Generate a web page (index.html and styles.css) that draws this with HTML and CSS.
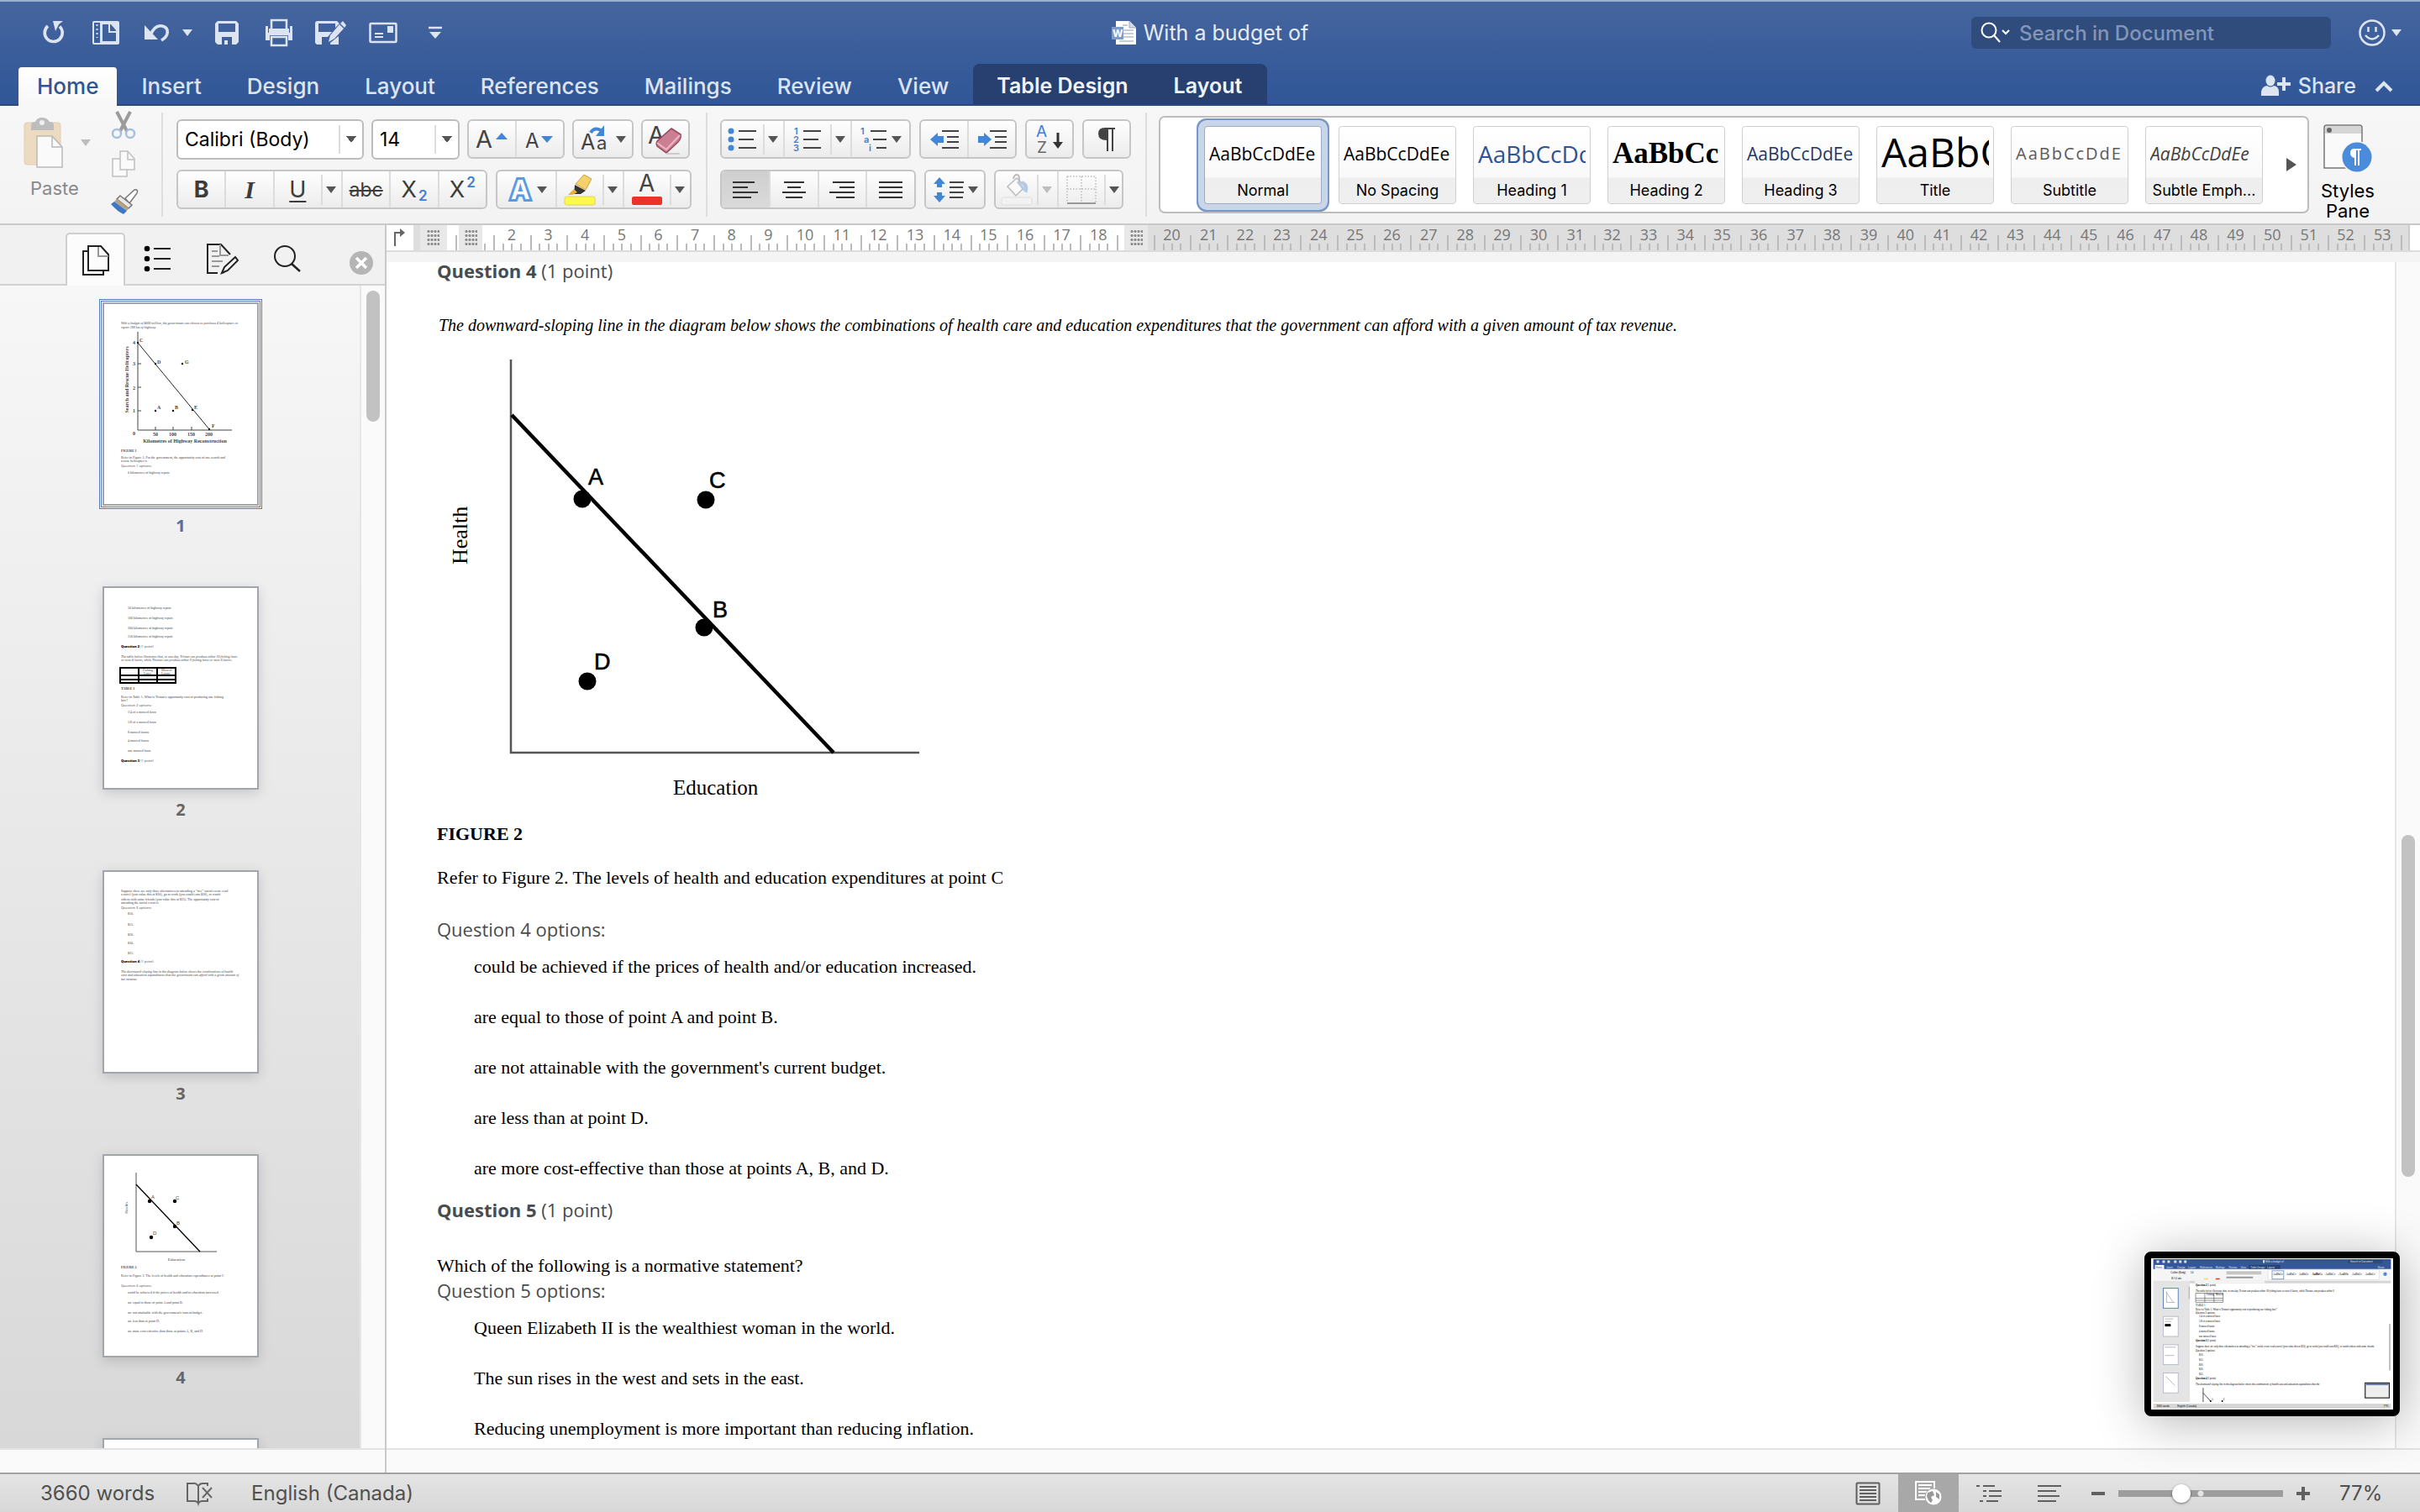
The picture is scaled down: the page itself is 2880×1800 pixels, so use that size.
FILE: index.html
```html
<!DOCTYPE html>
<html lang="en">
<head>
<meta charset="utf-8">
<title>With a budget of</title>
<link rel="stylesheet" href="styles.css">
</head>
<body>
<header class="header">
  <div class="titlebar">
    <div class="quick">
      <button class="qbtn" aria-label="Repeat"><svg width="28" height="30" viewBox="0 0 28 30"><path d="M7 7A10.500 10.500 0 1 0 21 7.500" fill="none" stroke="#dde4f1" stroke-width="3.600"/><path d="M13 1H25L20 5L16 13Z" fill="#dde4f1"/></svg></button>
      <button class="qbtn" aria-label="Sidebar"><svg width="32" height="30" viewBox="0 0 32 30"><path fill-rule="evenodd" d="M2 1H30Q32 1 32 3V27Q32 29 30 29H2Q0 29 0 27V3Q0 1 2 1ZM2 3V27H9V3ZM12 5V25H28V12L22 5Z" fill="#dde4f1"/><path d="M5.500 5V21" stroke="#dde4f1" stroke-width="2" stroke-dasharray="2 3"/><path d="M20 5V14H28" fill="none" stroke="#dde4f1" stroke-width="2"/></svg></button>
      <button class="qbtn undo" aria-label="Undo"><svg width="32" height="26" viewBox="0 0 32 26"><path d="M8 16C12 6 17 4 22 5C31 7 30 17 21 22" fill="none" stroke="#dde4f1" stroke-width="3.600"/><path d="M1 4V21H17Z" fill="#dde4f1"/></svg></button>
      <button class="qbtn qdrop" aria-label="Undo list"><i class="caret light"></i></button>
      <button class="qbtn" aria-label="Save"><svg width="28" height="30" viewBox="0 0 28 30"><path fill-rule="evenodd" d="M3 1H25L28 4V26L25 29H3L0 26V4ZM4 4V14H24V4ZM8 20V29H11V24H15V29H20V20Z" fill="#dde4f1"/></svg></button>
      <button class="qbtn" aria-label="Print"><svg width="34" height="34" viewBox="0 0 34 34"><rect x="8" y="2" width="18" height="12" fill="none" stroke="#dde4f1" stroke-width="2.500"/><path d="M1 9H4V17H30V9H33V26H28V20H6V26H1Z" fill="#dde4f1"/><rect x="5" y="12" width="24" height="6" fill="#dde4f1"/><rect x="8" y="22" width="18" height="10" fill="none" stroke="#dde4f1" stroke-width="2.500"/></svg></button>
      <button class="qbtn" aria-label="Save as"><svg width="38" height="30" viewBox="0 0 38 30"><path fill-rule="evenodd" d="M3 1H26L29 4L24 9V4H4V14H20L15 20H8V29H2L0 27V4Q0 1 3 1ZM18 27L28 19V29H18Z" fill="#dde4f1"/><path d="M16 26L18 18L29 5L34 10L23 22Z M30 4L33 1L37 6L35 9Z" fill="#dde4f1"/></svg></button>
      <button class="qbtn" aria-label="Mail"><svg width="34" height="26" viewBox="0 0 34 26"><rect x="1.500" y="2" width="31" height="22" rx="1" fill="none" stroke="#dde4f1" stroke-width="2.500"/><rect x="22" y="5" width="7" height="8" fill="#dde4f1"/><path d="M7 14H17M7 18H17" stroke="#dde4f1" stroke-width="2"/></svg></button>
      <button class="qbtn" aria-label="Customize toolbar"><svg width="18" height="18" viewBox="0 0 18 18"><path d="M1 3H17" stroke="#dde4f1" stroke-width="2.500"/><path d="M2 8H16L9 16Z" fill="#dde4f1"/></svg></button>
    </div>
    <h1 class="doctitle"><svg width="30" height="30" viewBox="0 0 30 30"><path d="M5 1H21L29 9V29H5Z" fill="#fff"/><path d="M21 1V9H29" fill="#d6dbe4" stroke="#9aa7bf"/><path d="M13 6H19M13 12H26M13 16H26M13 20H26M9 25H26" stroke="#b4bccb" stroke-width="1.500"/><rect x="0" y="8" width="14" height="15" fill="#7f9cc9"/><text x="1" y="20" font-size="12" font-weight="700" fill="#fff">W</text></svg>With a budget of</h1>
    <div class="titleright">
      <label class="search"><svg width="36" height="26" viewBox="0 0 36 26"><circle cx="10" cy="10" r="8.500" fill="none" stroke="#fff" stroke-width="2"/><path d="M16 16L23 24" stroke="#fff" stroke-width="2"/><path d="M26 10L30 14L34 10" fill="none" stroke="#fff" stroke-width="2"/></svg><input type="text" placeholder="Search in Document" aria-label="Search in Document"></label>
      <button class="smile" aria-label="Feedback"><svg width="34" height="34" viewBox="0 0 34 34"><circle cx="17" cy="17" r="14.500" fill="none" stroke="#dde4f1" stroke-width="2.500"/><path d="M12.500 10V16M21.500 10V16M9 20Q17 29 25 20" fill="none" stroke="#dde4f1" stroke-width="2.500"/></svg><i class="caret light"></i></button>
    </div>
  </div>
  <div class="tabbar">
    <nav class="tabs">
      <a href="#" class="tab active">Home</a><a href="#" class="tab">Insert</a><a href="#" class="tab">Design</a><a href="#" class="tab">Layout</a><a href="#" class="tab">References</a><a href="#" class="tab">Mailings</a><a href="#" class="tab">Review</a><a href="#" class="tab">View</a>
      <div class="context"><a href="#" class="tab">Table Design</a><a href="#" class="tab">Layout</a></div>
    </nav>
    <button class="share"><svg width="36" height="26" viewBox="0 0 36 26"><ellipse cx="11" cy="7" rx="5.500" ry="6.500" fill="#dde4f1"/><path d="M0 25V20Q1 14 7 13Q11 16 15 13Q21 14 21 20V25Z" fill="#dde4f1"/><path d="M27 3V19M19 11H35" stroke="#dde4f1" stroke-width="4"/></svg>Share</button>
    <button class="collapse" aria-label="Collapse ribbon"><svg width="22" height="14" viewBox="0 0 22 14"><path d="M2 12L11 3L20 12" fill="none" stroke="#dde4f1" stroke-width="4"/></svg></button>
  </div>
</header>

<section class="ribbon" aria-label="Home ribbon">
  <div class="clipboard">
    <button class="paste" disabled><span class="pasteicon"><svg width="50" height="62" viewBox="0 0 50 62"><rect x="1" y="7" width="43" height="50" rx="3" fill="#ecdbc0" stroke="#e2cfae"/><path d="M9 16V10Q9 6 14 6Q16 1 22 1T31 6Q36 6 36 10V16Z" fill="#bdbdbd"/><circle cx="22" cy="7" r="3" fill="#f0f0f0"/><path d="M16 23H34L46 36V60H16Z" fill="#fafafa" stroke="#b9b9b9" stroke-width="1.500"/><path d="M34 23V36H46" fill="none" stroke="#b9b9b9" stroke-width="1.500"/></svg><i class="caret pale"></i></span>Paste</button>
    <div class="clipcol">
      <button aria-label="Cut" disabled><svg width="32" height="34" viewBox="0 0 32 34"><path d="M8 1L20 24M24 1L12 24" stroke="#9b9b9b" stroke-width="4"/><circle cx="8" cy="27" r="5" fill="none" stroke="#a5c0df" stroke-width="2.500"/><circle cx="24" cy="27" r="5" fill="none" stroke="#a5c0df" stroke-width="2.500"/></svg></button>
      <button aria-label="Copy" disabled><svg width="32" height="34" viewBox="0 0 32 34"><path d="M3 11H20V32H3Z" fill="#fafafa" stroke="#c0c0c0" stroke-width="1.500"/><path d="M12 2H21L29 11V24H12Z" fill="#fafafa" stroke="#c0c0c0" stroke-width="1.500"/><path d="M21 2V12H29" fill="none" stroke="#c0c0c0" stroke-width="1.500"/></svg></button>
      <button aria-label="Format painter"><svg width="34" height="32" viewBox="0 0 34 32"><path d="M18 12L29 2Q34 1 32 6L23 18Z" fill="#fff" stroke="#777" stroke-width="1.500"/><path d="M12 9L26 20L22 24L8 13Z" fill="#e8e8e8" stroke="#777" stroke-width="1.500"/><path d="M8 13L22 24L20 27L5 16Z" fill="#b8a283"/><path d="M5 16L20 27L16 31Q9 28 1 19Z" fill="#3d78c5"/></svg></button>
    </div>
  </div>
  <div class="sep"></div>
  <div class="fontgroup">
    <div class="rrow">
      <select class="combo fontname" aria-label="Font"><option>Calibri (Body)</option></select>
      <select class="combo fontsize" aria-label="Font size"><option>14</option></select>
      <div class="grp g-116"><button aria-label="Grow font"><svg width="42" height="34" viewBox="0 0 42 34"><text x="1" y="27" font-size="29">A</text><path d="M25 17L32 9L39 17Z" fill="#4287d6"/></svg></button><button aria-label="Shrink font"><svg width="42" height="34" viewBox="0 0 42 34"><text x="3" y="27" font-size="24">A</text><path d="M22 13H36L29 21Z" fill="#4287d6"/></svg></button></div>
      <div class="grp g-73"><button aria-label="Change case"><svg width="38" height="34" viewBox="0 0 38 34"><text x="0" y="29" font-size="25">A</text><text x="19" y="29" font-size="22">a</text><path d="M12 9Q16 2 24 6" fill="none" stroke="#4287d6" stroke-width="4"/><path d="M28 0V13H18Z" fill="#4287d6"/></svg><i class="caret"></i></button></div>
      <div class="grp g-59"><button aria-label="Clear formatting"><svg width="42" height="42" viewBox="0 0 42 42"><text x="0" y="26" font-size="29">A</text><path d="M28 8L39 15Q40 20 36 24L22 37L11 29Q9 25 12 22Z" fill="#cc7e92" stroke="#97465c" stroke-width="1.500"/><path d="M11 25L22 33L38 16" fill="none" stroke="#e9b9c4" stroke-width="2"/><path d="M22 38H38" stroke="#ccc" stroke-width="2"/></svg></button></div>
    </div>
    <div class="rrow">
      <div class="grp g-370"><button class="fb" aria-label="Bold"><b>B</b></button><button class="fb it" aria-label="Italic"><i>I</i></button><button class="fb un" aria-label="Underline"><u>U</u></button><button class="drop" aria-label="Underline style"><i class="caret"></i></button><button class="fb st" aria-label="Strikethrough"><s>abc</s></button><button class="fb" aria-label="Subscript">X<sub>2</sub></button><button class="fb" aria-label="Superscript">X<sup>2</sup></button></div>
      <div class="grp g-233"><button class="w70" aria-label="Text effects"><svg width="32" height="34" viewBox="0 0 32 34"><text class="hollow" x="5" y="28" font-size="31" font-weight="600" stroke="#5a9be0" stroke-width="6">A</text><text class="hollow" x="5" y="28" font-size="31" font-weight="600">A</text></svg><i class="caret"></i></button><button class="w56" aria-label="Highlight"><svg width="38" height="38" viewBox="0 0 38 38"><path d="M14 12L24 1L33 6L26 19Z" fill="#f5d06b" stroke="#c9a23c"/><path d="M13 13L26 20L20 24H12Z" fill="#333"/><path d="M12 18L16 22L10 25H5Z" fill="#e6b23c"/><rect x="1" y="27" width="36" height="10" rx="2" fill="#fdf84a" stroke="#dcd65a"/></svg></button><button class="drop" aria-label="Highlight colour"><i class="caret"></i></button><button class="w56" aria-label="Font colour"><svg width="38" height="38" viewBox="0 0 38 38"><text x="9" y="21" font-size="28">A</text><rect x="1" y="27" width="36" height="10" rx="2" fill="#ea3323"/></svg></button><button class="drop" aria-label="Font colours"><i class="caret"></i></button></div>
    </div>
  </div>
  <div class="sep"></div>
  <div class="paragroup">
    <div class="rrow">
      <div class="grp g-227"><button class="w49" aria-label="Bullets"><svg width="36" height="30" viewBox="0 0 36 30"><g fill="#4287d6"><circle cx="4" cy="5" r="3.500"/><circle cx="4" cy="15" r="3.500"/><circle cx="4" cy="25" r="3.500"/></g><path d="M13 5H34M13 15H31M13 25H34" stroke="#444" stroke-width="2"/></svg></button><button class="drop" aria-label="Bullet styles"><i class="caret"></i></button><button class="w56" aria-label="Numbering"><svg width="36" height="32" viewBox="0 0 36 32"><g font-size="11" font-weight="600"><text class="bl" x="2" y="10">1</text><text class="bl" x="1" y="20">2</text><text class="bl" x="1" y="30">3</text></g><path d="M13 6H34M13 16H31M13 26H34" stroke="#444" stroke-width="2"/></svg></button><button class="drop" aria-label="Number styles"><i class="caret"></i></button><button class="w70" aria-label="Multilevel list"><svg width="34" height="32" viewBox="0 0 34 32"><g font-size="11" font-weight="600"><text class="bl" x="1" y="10">1</text><text class="bl" x="5" y="20">a</text><text class="bl" x="11" y="30">i</text></g><path d="M13 6H32M16 16H32M20 26H32" stroke="#444" stroke-width="2"/></svg><i class="caret"></i></button></div>
      <div class="grp g-116"><button aria-label="Decrease indent"><svg width="36" height="26" viewBox="0 0 36 26"><path d="M1 13L10 5V9H17V17H10V21Z" fill="#4287d6"/><path d="M15 3H35M21 10H35M21 16H35M15 23H35" stroke="#444" stroke-width="2"/></svg></button><button aria-label="Increase indent"><svg width="36" height="26" viewBox="0 0 36 26"><path d="M17 13L8 5V9H1V17H8V21Z" fill="#4287d6"/><path d="M15 3H35M21 10H35M21 16H35M15 23H35" stroke="#444" stroke-width="2"/></svg></button></div>
      <div class="grp g-58"><button aria-label="Sort"><svg width="34" height="36" viewBox="0 0 34 36"><text class="bl" x="1" y="15" font-size="19">A</text><text class="zed" x="2" y="34" font-size="19">Z</text><path d="M27 10V22" stroke="#333" stroke-width="3"/><path d="M21 21H33L27 29Z" fill="#333"/></svg></button></div>
      <div class="grp g-58"><button aria-label="Show marks"><svg width="24" height="32" viewBox="0 0 24 32"><path d="M22 2V4H20V30H18V4H14V30H12V17Q2 17 2 9T12 2Z" fill="#444"/></svg></button></div>
    </div>
    <div class="rrow">
      <div class="grp g-233"><button class="on" aria-label="Align left"><svg width="30" height="24" viewBox="0 0 30 24"><path d="M0 3H26M0 9H18M0 15H30M0 21H22" stroke="#333" stroke-width="2"/></svg></button><button aria-label="Centre"><svg width="30" height="24" viewBox="0 0 30 24"><path d="M3 3H27M7 9H23M1 15H29M5 21H25" stroke="#333" stroke-width="2"/></svg></button><button aria-label="Align right"><svg width="30" height="24" viewBox="0 0 30 24"><path d="M4 3H30M12 9H30M0 15H30M8 21H30" stroke="#333" stroke-width="2"/></svg></button><button aria-label="Justify"><svg width="30" height="24" viewBox="0 0 30 24"><path d="M1 3H29M1 9H29M1 15H29M1 21H29" stroke="#333" stroke-width="2"/></svg></button></div>
      <div class="grp g-72"><button aria-label="Line spacing"><svg width="38" height="30" viewBox="0 0 38 30"><path d="M8 0L15 8H11V12H5V8H1Z M8 30L15 22H11V18H5V22H1Z" fill="#4287d6"/><path d="M20 6H37M20 12H36M20 18H37M20 24H36" stroke="#444" stroke-width="2"/></svg><i class="caret"></i></button></div>
      <div class="grp g-154"><button class="w49" aria-label="Shading" disabled><svg width="38" height="38" viewBox="0 0 38 38"><path d="M8 15L19 5L29 15L18 26Z" fill="#fafafa" stroke="#bbb" stroke-width="1.500"/><path d="M15 6Q16 1 19 1T22 6V12" fill="none" stroke="#bbb" stroke-width="2"/><path d="M20 9L29 20M25 10Q33 12 30 22" fill="none" stroke="#b3c9e6" stroke-width="3"/><rect x="1" y="28" width="36" height="9" rx="2" fill="#f2f2f2" stroke="#ddd"/></svg></button><button class="drop" aria-label="Shading colour" disabled><i class="caret pale"></i></button><button class="w56" aria-label="Borders"><svg width="36" height="36" viewBox="0 0 36 36"><path d="M1 2H35V33M1 2V33M18 2V33M1 17H35" fill="none" stroke="#bbb" stroke-width="1.500" stroke-dasharray="1.500 2"/><path d="M1 34H35" stroke="#999" stroke-width="2"/></svg></button><button class="drop" aria-label="Border styles"><i class="caret"></i></button></div>
    </div>
  </div>
  <div class="sep"></div>
  <div class="gallery">
    <div class="cells">
      <button class="cell sel"><span class="sample">AaBbCcDdEe</span><span class="name">Normal</span></button>
      <button class="cell"><span class="sample">AaBbCcDdEe</span><span class="name">No Spacing</span></button>
      <button class="cell"><span class="sample s-h1">AaBbCcDd</span><span class="name">Heading 1</span></button>
      <button class="cell"><span class="sample s-h2">AaBbCc</span><span class="name">Heading 2</span></button>
      <button class="cell"><span class="sample s-h3">AaBbCcDdEe</span><span class="name">Heading 3</span></button>
      <button class="cell"><span class="sample s-title">AaBbC</span><span class="name">Title</span></button>
      <button class="cell"><span class="sample s-sub">AaBbCcDdEe</span><span class="name">Subtitle</span></button>
      <button class="cell"><span class="sample s-emph">AaBbCcDdEe</span><span class="name">Subtle Emph...</span></button>
    </div>
    <button class="more" aria-label="More styles"><svg width="14" height="18" viewBox="0 0 14 18"><path d="M1 1L13 9L1 17Z" fill="#555"/></svg></button>
  </div>
  <button class="stylespane"><svg width="60" height="60" viewBox="0 0 60 60"><path d="M2 4Q2 1 5 1H44Q47 1 47 4V52H2Z" fill="#fafafa" stroke="#777" stroke-width="1.500"/><path d="M3 11V4Q3 2 5 2H44Q46 2 46 4V11Z" fill="#d5d5d5"/><circle cx="8" cy="7" r="3" fill="#666"/><circle cx="41" cy="39" r="19" fill="#f6f6f6"/><circle cx="41" cy="39" r="17.500" fill="#4a8bdb"/><path d="M46 29V31H44V49H42V31H40V49H38V40Q33 39 33 34T38 29Z" fill="#fff"/></svg>Styles<br>Pane</button>
</section>

<main class="workspace">
  <aside class="sidebar">
    <div class="sidetabs">
      <button class="stab act" aria-label="Thumbnails"><svg width="36" height="38" viewBox="0 0 36 38"><path d="M10 8H3V36H27V31" fill="none" stroke="#222" stroke-width="2"/><path d="M9 2H24L33 12V31H9Z" fill="none" stroke="#222" stroke-width="2"/><path d="M21 3V14H33" fill="none" stroke="#999" stroke-width="2"/></svg></button>
      <button class="stab" aria-label="Headings"><svg width="34" height="34" viewBox="0 0 34 34"><circle cx="4" cy="5" r="3.300"/><circle cx="4" cy="17" r="3.300"/><circle cx="4" cy="29" r="3.300"/><path d="M12 5H32M12 17H32M12 29H32" stroke="#222" stroke-width="2"/></svg></button>
      <button class="stab" aria-label="Review"><svg width="40" height="38" viewBox="0 0 40 38"><path d="M14 36H2V2H18L29 14M29 27L20 36" fill="none" stroke="#222" stroke-width="2"/><path d="M17 2V15H27M7 10H14M7 16H16M7 22H20M7 28H16" fill="none" stroke="#999" stroke-width="2"/><path d="M19 36L22 29L35 17L38 21L26 33Z" fill="#f4f4f4" stroke="#222" stroke-width="2"/></svg></button>
      <button class="stab" aria-label="Find"><svg width="34" height="34" viewBox="0 0 34 34"><circle cx="14" cy="14" r="12" fill="none" stroke="#222" stroke-width="2"/><path d="M22 23L32 32" stroke="#222" stroke-width="2.500"/></svg></button>
      <button class="close" aria-label="Close sidebar"><svg width="28" height="28" viewBox="0 0 28 28"><circle cx="14" cy="14" r="14" fill="#b5b5b5"/><path d="M8 8L20 20M20 8L8 20" stroke="#fff" stroke-width="3.500"/></svg></button>
    </div>
    <div class="sidebody">
      <ol class="thumbs">
        <li class="current"><button aria-label="Page 1"><svg viewBox="0 0 186 242"><g font-size="4" font-style="italic"><text x="22" y="26">With a budget of $600 million, the government can choose to purchase 4 helicopters or</text><text x="22" y="31">repair 200 km of highway.</text></g><path d="M42 35V152H154M42 73H46M42 101H46M42 129H46M63 152V148M84 152V148M106 152V148" fill="none" stroke="#444" stroke-width="1"/><path d="M42 48L127 151" stroke="#222" stroke-width="1"/><g><circle cx="42" cy="48" r="1.200"/><circle cx="63" cy="73" r="1.200"/><circle cx="95" cy="73" r="1.200"/><circle cx="63" cy="129" r="1.200"/><circle cx="84" cy="129" r="1.200"/><circle cx="107" cy="128" r="1.200"/><circle cx="127" cy="151" r="1.200"/></g><g font-size="6" font-weight="700"><text x="44" y="47">C</text><text x="65" y="73">D</text><text x="98" y="73">G</text><text x="65" y="127">A</text><text x="86" y="127">B</text><text x="109" y="127">E</text><text x="130" y="149">F</text><text x="36" y="50">4</text><text x="36" y="75">3</text><text x="36" y="104">2</text><text x="36" y="131">1</text><text x="36" y="158">0</text><text x="60" y="159">50</text><text x="79" y="159">100</text><text x="101" y="159">150</text><text x="122" y="159">200</text><text x="98" y="167" text-anchor="middle">Kilometres of Highway Reconstruction</text><text transform="translate(31 92) rotate(-90)" text-anchor="middle">Search and Rescue Helicopters</text></g><g font-size="4"><text x="22" y="178" font-weight="700">FIGURE 1</text><text x="22" y="186">Refer to Figure 1. For the government, the opportunity cost of one search and</text><text x="22" y="190">rescue helicopter is</text><text class="ss" x="22" y="196">Question 1 options:</text><text x="30" y="204">0 kilometres of highway repair.</text></g></svg></button><span>1</span></li>
        <li><button aria-label="Page 2"><svg viewBox="0 0 186 242"><g font-size="4"><text x="30" y="27">50 kilometres of highway repair.</text><text x="30" y="39">100 kilometres of highway repair.</text><text x="30" y="51">200 kilometres of highway repair.</text><text x="30" y="61">150 kilometres of highway repair.</text><text class="ss" x="22" y="73"><tspan class="strong">Question 2</tspan> (1 point)</text><g font-style="italic"><text x="22" y="85">The table below illustrates that, in one day, Tristan can produce either 10 fishing lures</text><text x="22" y="89">or mow 8 lawns, while Thomas can produce either 9 fishing lures or mow 6 lawns.</text></g><path d="M21 97H87V115H21ZM43 97V115M65 97V115M21 106H87M21 111H87" fill="none" stroke="#000" stroke-width="2"/><text x="48" y="101">Fishing</text><text x="49" y="105">Lures</text><text x="70" y="101">Mowed</text><text x="70" y="105">Lawns</text><text x="22" y="123" font-weight="700">TABLE 1</text><text x="22" y="133">Refer to Table 1. What is Tristan's opportunity cost of producing one fishing</text><text x="22" y="137">lure?</text><text class="ss" x="22" y="143">Question 2 options:</text><text x="30" y="151">1/4 of a mowed lawn</text><text x="30" y="163">1/8 of a mowed lawn</text><text x="30" y="175">8 mowed lawns</text><text x="30" y="185">4 mowed lawns</text><text x="30" y="197">one mowed lawn</text><text class="ss" x="22" y="209"><tspan class="strong">Question 3</tspan> (1 point)</text></g></svg></button><span>2</span></li>
        <li><button aria-label="Page 3"><svg viewBox="0 0 186 242"><g font-size="4"><text x="22" y="26">Suppose there are only three alternatives to attending a "free" social event: read</text><text x="22" y="30">a novel (you value this at $10), go to work (you could earn $20), or watch</text><text x="22" y="36">videos with some friends (you value this at $25). The opportunity cost of</text><text x="22" y="40">attending the social event is</text><text class="ss" x="22" y="46">Question 3 options:</text><text x="30" y="53">$10.</text><text x="30" y="66">$55.</text><text x="30" y="78">$20.</text><text x="30" y="88">$30.</text><text x="30" y="100">$25.</text><text class="ss" x="22" y="110"><tspan class="strong">Question 4</tspan> (1 point)</text><g font-style="italic"><text x="22" y="122">The downward-sloping line in the diagram below shows the combinations of health</text><text x="22" y="126">care and education expenditures that the government can afford with a given amount of</text><text x="22" y="131">tax revenue.</text></g></g></svg></button><span>3</span></li>
        <li><button aria-label="Page 4"><svg viewBox="0 0 186 242"><path d="M40 22V116H136" fill="none" stroke="#555"/><path d="M40 36L116 116" stroke="#000" stroke-width="1.300"/><circle cx="56" cy="56" r="2.200"/><circle cx="86" cy="56" r="2.200"/><circle cx="86" cy="86" r="2.200"/><circle cx="58" cy="99" r="2.200"/><g class="sans" font-size="6"><text x="58" y="53">A</text><text x="87" y="54">C</text><text x="88" y="84">B</text><text x="60" y="96">D</text></g><text font-size="5" x="88" y="127" text-anchor="middle">Education</text><text font-size="5" transform="translate(30 64) rotate(-90)" text-anchor="middle">Health</text><g font-size="4"><text x="22" y="136" font-weight="700">FIGURE 2</text><text x="22" y="146">Refer to Figure 2. The levels of health and education expenditures at point C</text><text class="ss" x="22" y="158">Question 4 options:</text><text x="30" y="166">could be achieved if the prices of health and/or education increased.</text><text x="30" y="178">are equal to those of point A and point B.</text><text x="30" y="190">are not attainable with the government's current budget.</text><text x="30" y="200">are less than at point D.</text><text x="30" y="212">are more cost-effective than those at points A, B, and D.</text></g></svg></button><span>4</span></li>
        <li><button aria-label="Page 5"></button></li>
      </ol>
      <div class="vscroll side"><i></i></div>
    </div>
    <div class="strip"></div>
  </aside>

  <section class="docarea">
    <div class="ruler">
      <div class="tabstop"><svg width="16" height="24" viewBox="0 0 16 24"><path d="M2 22V6H9" fill="none" stroke="#666" stroke-width="2"/><path d="M8 1L14 6L8 11Z" fill="#666"/></svg></div>
      <div class="hatch h1"><i></i></div><div class="blank"></div><div class="hatch h2"><i></i></div><div class="stub"></div>
      <div class="scale">
        <span>2</span><span>3</span><span>4</span><span>5</span><span>6</span><span>7</span><span>8</span><span>9</span><span>10</span><span>11</span><span>12</span><span>13</span><span>14</span><span>15</span><span>16</span><span>17</span><span>18</span><span class="edge"><i></i></span><span class="g">20</span><span class="g">21</span><span class="g">22</span><span class="g">23</span><span class="g">24</span><span class="g">25</span><span class="g">26</span><span class="g">27</span><span class="g">28</span><span class="g">29</span><span class="g">30</span><span class="g">31</span><span class="g">32</span><span class="g">33</span><span class="g">34</span><span class="g">35</span><span class="g">36</span><span class="g">37</span><span class="g">38</span><span class="g">39</span><span class="g">40</span><span class="g">41</span><span class="g">42</span><span class="g">43</span><span class="g">44</span><span class="g">45</span><span class="g">46</span><span class="g">47</span><span class="g">48</span><span class="g">49</span><span class="g">50</span><span class="g">51</span><span class="g">52</span><span class="g">53</span>
      </div>
      <div class="tail"></div>
    </div>
    <div class="docrow">
      <article class="page">
        <h2 class="q"><b>Question 4</b> (1 point)</h2>
        <p class="lead"><em>The downward-sloping line in the diagram below shows the combinations of health care and education expenditures that the government can afford with a given amount of tax revenue.</em></p>
        <svg class="figure" width="600" height="540" viewBox="0 0 600 540" role="img" aria-label="Health and education diagram"><path d="M88 8V476H574" fill="none" stroke="#555" stroke-width="2.500"/><path d="M89 74L472 476" stroke="#000" stroke-width="4.500"/><circle cx="173" cy="174" r="10.500"/><circle cx="320" cy="175" r="10.500"/><circle cx="318" cy="327" r="10.500"/><circle cx="179" cy="391" r="10.500"/><g class="sans" font-size="27" stroke="#000" stroke-width="0.600"><text x="180" y="157">A</text><text x="324" y="161">C</text><text x="328" y="315">B</text><text x="187" y="377">D</text></g><text x="281" y="526" font-size="25">Education</text><text font-size="26" transform="translate(36 252) rotate(-90)">Health</text></svg>
        <p class="fig"><b>FIGURE 2</b></p>
        <p class="refer">Refer to Figure 2. The levels of health and education expenditures at point C</p>
        <h3 class="opt">Question 4 options:</h3>
        <ul class="answers"><li>could be achieved if the prices of health and/or education increased.</li><li>are equal to those of point A and point B.</li><li>are not attainable with the government's current budget.</li><li>are less than at point D.</li><li>are more cost-effective than those at points A, B, and D.</li></ul>
        <h2 class="q q5"><b>Question 5</b> (1 point)</h2>
        <p class="which">Which of the following is a normative statement?</p>
        <h3 class="opt tight">Question 5 options:</h3>
        <ul class="answers"><li>Queen Elizabeth II is the wealthiest woman in the world.</li><li>The sun rises in the west and sets in the east.</li><li>Reducing unemployment is more important than reducing inflation.</li></ul>
      </article>
      <div class="vscroll doc"><i></i></div>
    </div>
    <div class="strip"></div>
  </section>
</main>

<footer class="status">
  <span class="words">3660 words</span>
  <button class="proof" aria-label="Proofing"><svg width="34" height="30" viewBox="0 0 34 30"><path d="M15 26V6Q12 2 9 3H2V24H10Q14 24 15 27Q16 24 20 24H26V21M15 6Q17 3 20 3H26V6" fill="none" stroke="#666" stroke-width="2"/><path d="M20 8L31 20M31 8L20 20" stroke="#666" stroke-width="2"/></svg></button>
  <span class="lang">English (Canada)</span>
  <div class="views">
    <button aria-label="Print layout"><svg width="30" height="28" viewBox="0 0 30 28"><rect x="1.500" y="1.500" width="27" height="25" rx="1" fill="none" stroke="#606060" stroke-width="2"/><path d="M5 6H25M5 10H25M5 14H25M5 18H25M5 22H25" stroke="#606060" stroke-width="2"/></svg></button>
    <button class="on" aria-label="Web layout"><svg width="34" height="30" viewBox="0 0 34 30"><path d="M14 22H2V1H24V10" fill="none" stroke="#fff" stroke-width="2"/><path d="M5 5H21M5 9H19M5 13H16M5 17H14" stroke="#fff" stroke-width="2"/><circle cx="23" cy="19" r="10" fill="#fff" stroke="#a8a8a8"/><path d="M16 14L22 12L24 17L20 19L22 23L20 26Q16 23 15 18ZM26 13L30 16L30 22L26 19Z" fill="#999"/></svg></button>
    <button aria-label="Outline"><svg width="32" height="26" viewBox="0 0 32 26"><path d="M1 4H5M9 4H23M9 10H13M16 10H31M9 16H13M16 16H31M5 22H9M13 22H27" stroke="#606060" stroke-width="2"/></svg></button>
    <button aria-label="Draft"><svg width="30" height="26" viewBox="0 0 30 26"><path d="M1 4H29M1 10H23M1 16H27M1 22H23" stroke="#606060" stroke-width="2"/></svg></button>
  </div>
  <button class="zoombtn" aria-label="Zoom out"><svg width="16" height="16" viewBox="0 0 16 16"><path d="M0 8H16" stroke="#606060" stroke-width="4"/></svg></button>
  <input class="zoom" type="range" min="0" max="100" value="37" aria-label="Zoom">
  <button class="zoombtn" aria-label="Zoom in"><svg width="16" height="16" viewBox="0 0 16 16"><path d="M0 8H16M8 0V16" stroke="#606060" stroke-width="4"/></svg></button>
  <span class="pct">77%</span>
</footer>

<button class="preview" aria-label="Screen capture preview">
  <svg viewBox="0 0 286 180"><rect width="286" height="180" fill="#fff"/><rect width="286" height="12" fill="#35579a"/><rect x="115" y="7" width="38" height="5" fill="#284272"/><rect x="234" y="1" width="42" height="4" rx="1" fill="#2d4a80"/><rect x="2" y="7" width="11" height="5" fill="#fff"/><rect y="12" width="286" height="14" fill="#f5f5f5"/>
  <g class="sans" font-size="3"><g fill="#dde4f1"><text x="135" y="4.500">With a budget of</text><text x="237" y="4.500">Search in Document</text><text x="16" y="11">Insert</text><text x="29" y="11">Design</text><text x="42" y="11">Layout</text><text x="56" y="11">References</text><text x="75" y="11">Mailings</text><text x="91" y="11">Review</text><text x="105" y="11">View</text><text x="117" y="11">Table Design</text><text x="137" y="11">Layout</text><text x="270" y="11">Share</text></g><text x="3" y="11" fill="#35579a">Home</text><text x="21" y="17">Calibri (Body)</text><text x="45" y="17">14</text><text x="22" y="24">B   I   U   abc</text></g>
  <g fill="#dde4f1"><rect x="4" y="1.500" width="3" height="3"/><rect x="11" y="1.500" width="3" height="3"/><rect x="17" y="1.500" width="3" height="3"/><rect x="25" y="1.500" width="3" height="3"/><rect x="31" y="1.500" width="3" height="3"/><rect x="37" y="1.500" width="3" height="3"/><rect x="132" y="1" width="2" height="3.500"/></g><g fill="#999"><rect x="88" y="15" width="42" height="1"/><rect x="88" y="17" width="42" height="1"/><rect x="88" y="21" width="32" height="2"/></g><rect x="61" y="23" width="5" height="1.500" fill="#fd4"/><rect x="75" y="23" width="5" height="1.500" fill="#e33"/><rect x="138" y="13" width="134" height="12" fill="#fff" stroke="#ccc" stroke-width="0.500"/><rect x="143" y="14" width="14" height="10" fill="#fff" stroke="#7b9bcc"/><g font-size="3.500"><text x="144" y="19">AaBbCc</text><text x="160" y="19">AaBbCc</text><text x="175" y="19">AaBbCc</text><text x="191" y="19" font-weight="700">AaBbCc</text><text x="207" y="19">AaBbCc</text><text x="223" y="19" font-size="5">AaBb</text><text x="239" y="19">AaBbCc</text><text x="255" y="19">AaBbCc</text></g><circle cx="279" cy="18" r="2.200" fill="#4a8bdb"/>
  <rect y="26" width="44" height="146" fill="#e4e4e4"/><rect x="44" y="26" width="242" height="3" fill="#d5d5d5"/><rect x="50" y="26" width="84" height="3" fill="#f4f4f4"/><g fill="#fff" stroke="#b7bcc6"><rect x="12" y="35" width="18" height="24" stroke="#5b7fbd"/><rect x="12" y="69" width="18" height="24"/><rect x="12" y="103" width="18" height="24"/><rect x="12" y="137" width="18" height="24"/></g><path d="M16 39V52H26M16 40L24 52M15 141L26 152M14 72H24M14 75H22M14 106H27M14 116H25" fill="none" stroke="#999" stroke-width="0.700"/><rect x="14" y="78" width="7" height="3"/><rect x="42.500" y="33" width="1.500" height="15" fill="#bbb"/><rect x="284" y="78" width="1.200" height="56" fill="#999"/>
  <g font-size="3"><text x="51" y="32" font-weight="700">Question 2</text><text x="65" y="32">(1 point)</text><text x="51" y="39" font-style="italic">The table below illustrates that, in one day, Tristan can produce either 10 fishing lures or mow 8 lawns, while Thomas can produce either 9</text><path d="M51 41H84V52H51ZM62 41V52M73 41V52M51 47H84M51 49.500H84" fill="none" stroke="#666" stroke-width="0.700"/><text x="64" y="44">Fishing</text><text x="75" y="44">Mowed</text><text x="51" y="57">TABLE 1</text><text x="51" y="62">Refer to Table 1. What is Tristan's opportunity cost of producing one fishing lure?</text><text x="51" y="65.500">Question 2 options:</text><text x="55" y="70">1/4 of a mowed lawn</text><text x="55" y="76">1/8 of a mowed lawn</text><text x="55" y="82">8 mowed lawns</text><text x="55" y="88">4 mowed lawns</text><text x="55" y="94">one mowed lawn</text><text x="51" y="99" font-weight="700">Question 3</text><text x="65" y="99">(1 point)</text><text x="51" y="106">Suppose there are only three alternatives to attending a "free" social event: read a novel (you value this at $10), go to work (you could earn $20), or watch videos with some friends</text><text x="51" y="111.500">Question 3 options:</text><text x="55" y="116">$10.</text><text x="55" y="122">$55.</text><text x="55" y="128">$20.</text><text x="55" y="134">$30.</text><text x="55" y="140">$25.</text><text x="51" y="145" font-weight="700">Question 4</text><text x="65" y="145">(1 point)</text><text x="51" y="152" font-style="italic">The downward-sloping line in the diagram below shows the combinations of health care and education expenditures that the</text><text x="70" y="170">A</text><text x="84" y="170">C</text></g><path d="M60 155V172M60 161L69 171" fill="none" stroke="#222" stroke-width="0.800"/><circle cx="69" cy="171" r="1"/><circle cx="83" cy="171" r="1"/><rect x="255" y="149" width="29" height="18" fill="#eee" stroke="#222" stroke-width="1.200"/><rect x="256" y="150" width="27" height="1.500" fill="#35579a"/><rect y="174" width="286" height="6" fill="#d6d6d6"/><g class="sans" font-size="3"><text x="4" y="178">3660 words</text><text x="29" y="178">English (Canada)</text><text x="277" y="178">77%</text></g></svg>
</button>
</body>
</html>
```

FILE: styles.css
```css
* { box-sizing: border-box; }
html, body { height: 100%; }
body {
  margin: 0; display: flex; flex-direction: column; overflow: hidden; position: relative;
  font-family: Inter, "Liberation Sans", sans-serif; color: #333; background: #fff;
}
button { font: inherit; color: inherit; background: none; border: 0; padding: 0; margin: 0; }
a { color: inherit; text-decoration: none; }
h1, h2, h3, p, ul, ol { margin: 0; padding: 0; font-weight: 400; }
ul, ol { list-style: none; }
svg { display: block; flex: none; overflow: visible; }

.caret { display: block; width: 0; height: 0; border: 6px solid transparent; border-top: 8px solid #555; border-bottom: 0; flex: none; }
.caret.light { border-top-color: #dde4f1; }
.caret.pale { border-top-color: #bdbdbd; }

/* title bar and tabs */
.header {
  flex: none; color: #dde4f1; border-top: 2px solid #9cb0d2; border-bottom: 2px solid #284a84;
  background: linear-gradient(#45659e, #335898 85%, #335695);
}
.titlebar { display: grid; grid-template-columns: 1fr auto 1fr; align-items: center; height: 74px; }
.quick { display: flex; align-items: center; padding-left: 33px; }
.qbtn { width: 62px; height: 36px; display: flex; align-items: center; justify-content: center; }
.qbtn.undo { width: 60px; }
.qbtn.qdrop { width: 22px; justify-content: flex-start; }
.doctitle { display: flex; align-items: center; gap: 8px; font-size: 25px; line-height: 30px; color: #e6ebf4; }
.titleright { display: flex; align-items: center; justify-content: flex-end; padding-right: 22px; gap: 32px; }
.search { width: 428px; height: 38px; border-radius: 6px; background: #304c7d; display: flex; align-items: center; padding-left: 11px; gap: 10px; }
.search input { flex: 1; min-width: 0; border: 0; outline: 0; background: none; font: 500 24px Inter, sans-serif; color: #fff; padding: 0; }
.search input::placeholder { color: #8496b8; opacity: 1; }
.smile { display: flex; align-items: center; gap: 6px; }
.tabbar { display: flex; align-items: flex-end; height: 48px; padding: 0 32px 0 22px; }
.tabs { display: flex; align-items: flex-end; margin-right: auto; }
.tab { height: 44px; line-height: 45px; padding: 0 27px; font-size: 26px; font-weight: 500; }
.tab.active { background: linear-gradient(#fff, #f7f7f7); color: #2f5597; border-radius: 4px 4px 0 0; padding: 0 22px; margin: 0 2px -2px 0; height: 46px; }
.context { display: flex; align-items: flex-end; height: 48px; background: #27406f; color: #f0f3f8; border-radius: 8px 8px 0 0; margin-left: 2px; padding: 0 3px 0 1px; }
.context .tab { font-size: 25px; font-weight: 600; }
.share { display: flex; align-items: center; gap: 8px; font-size: 25px; font-weight: 500; height: 44px; }
.collapse { height: 42px; margin-left: 22px; }

/* ribbon */
.ribbon { flex: none; height: 142px; display: flex; background: linear-gradient(#f7f7f7, #f3f3f3); border-bottom: 2px solid #c8c8c8; }
.ribbon text { fill: #444; }
.ribbon text.bl { fill: #3f7fd0; }
.ribbon text.zed { fill: #666; }
.ribbon text.hollow { fill: #fff; }
.sep { width: 2px; margin: 8px 0; background: #dedede; flex: none; }
.clipboard { width: 192px; display: flex; flex: none; padding-top: 6px; }
.paste { width: 92px; margin-left: 28px; font-size: 22px; line-height: 28px; color: #8a8a8a; display: flex; flex-direction: column; align-items: flex-start; padding: 7px 0 0 0; gap: 9px; white-space: nowrap; text-indent: 8px; }
.pasteicon { display: flex; align-items: center; gap: 18px; }
.clipcol { display: flex; flex-direction: column; gap: 12px; margin-left: 11px; }
.fontgroup, .paragroup { display: flex; flex-direction: column; gap: 13px; padding-top: 16px; flex: none; }
.fontgroup { margin: 0 17px 0 16px; width: 613px; }
.paragroup { margin: 0 17px 0 15px; width: 489px; }
.rrow { display: flex; gap: 10px; height: 47px; }
.fontgroup .rrow:first-child { gap: 9px; }
.combo {
  appearance: none; height: 48px; border: 2px solid #bdbdbd; border-radius: 6px; margin: 0;
  font: 23px Inter, sans-serif; color: #000; padding: 0 0 0 8px;
  background-color: #fff;
  background-image: linear-gradient(#ddd, #ddd), linear-gradient(to bottom right, #555 50%, transparent 51%), linear-gradient(to bottom left, #555 50%, transparent 51%);
  background-size: 2px 34px, 6px 8px, 6px 8px;
  background-position: right 26px center, right 7px center, right 13px center;
  background-repeat: no-repeat;
}
.combo.fontname { width: 223px; }
.combo.fontsize { width: 105px; }
.grp { display: flex; height: 47px; border: 2px solid #c6c6c6; border-radius: 6px; background: linear-gradient(#fefefe, #ececec); overflow: hidden; flex: none; }
.grp button { flex: 1; min-width: 0; display: flex; align-items: center; justify-content: center; gap: 4px; border-left: 2px solid #dcdcdc; }
.grp button:first-child { border-left: 0; }
.grp .drop { flex: none; width: 24px; border-left: 0; background: linear-gradient(#dcdcdc, #dcdcdc) left center / 2px 36px no-repeat; }
.grp .on { background: linear-gradient(#cfcfcf, #dadada); }
.g-58, .g-59 { width: 58px; }
.g-72, .g-73 { width: 73px; }
.g-116 { width: 116px; }
.g-154 { width: 154px; }
.g-227 { width: 227px; }
.g-233 { width: 233px; }
.g-370 { width: 370px; }
.grp .w49 { flex: none; width: 49px; }
.grp .w56 { flex: none; width: 56px; }
.grp .w70 { flex: 1; }
.grp .fb { font-size: 27px; gap: 2px; color: #3c3c3c; }
.fb b { font-weight: 700; }
.grp .fb.it { font-family: "Liberation Serif", serif; font-size: 30px; font-weight: 700; }
.grp .fb.st { font-size: 23px; }
.fb sub, .fb sup { font-size: 17px; font-weight: 600; color: #3f7fd0; line-height: 17px; }
.fb sub { margin-top: 16px; }
.fb sup { margin-bottom: 16px; }
.fb u { text-underline-offset: 4px; }

.gallery { flex: 1; min-width: 0; margin: 12px 0 12px 14px; height: 116px; background: #fff; border: 2px solid #bdbdbd; border-radius: 7px; display: flex; align-items: center; justify-content: space-between; padding: 0 12px 0 52px; }
.cells { display: flex; gap: 20px; }
.cell { width: 140px; height: 93px; border: 1px solid #cfcfcf; border-radius: 4px; display: flex; flex-direction: column; background: linear-gradient(#fff, #f9f9f9 66%, #eee 67%, #efefef); }
.cell.sel { box-shadow: 0 0 0 7px #c9d6e9, 0 0 0 9px #7696c6; border-color: #9eabc0; }
.sample { height: 62px; line-height: 64px; margin: 0 5px; overflow: hidden; white-space: nowrap; font-family: "Open Sans", sans-serif; font-size: 21px; color: #000; text-align: left; }
.name { font-size: 18px; line-height: 30px; text-align: center; color: #000; }
.s-h1 { font-size: 28px; color: #2f5496; }
.s-h2 { font-family: "Liberation Serif", serif; font-size: 35px; font-weight: 700; }
.s-h3 { font-size: 21px; color: #1f3763; }
.s-title { font-size: 48px; line-height: 60px; }
.s-sub { font-size: 20px; color: #5a5a5a; letter-spacing: 2px; }
.s-emph { color: #404040; font-style: italic; }
.stylespane { display: block; flex: none; width: 132px; font-size: 22px; line-height: 24px; color: #000; padding: 18px 50px 0 10px; text-align: center; }
.stylespane svg { margin: 0 0 7px 6px; }

/* workspace */
.workspace { flex: 1; min-height: 0; display: flex; }
.sidebar { width: 460px; flex: none; border-right: 2px solid #c9c9c9; display: flex; flex-direction: column; background: #f1f1f1; }
.sidetabs { height: 72px; flex: none; display: flex; align-items: flex-end; padding: 0 14px 0 78px; border-bottom: 2px solid #d2d2d2; }
.stab { width: 77px; height: 61px; display: flex; align-items: center; justify-content: center; }
.stab.act { width: 71px; background: #fcfcfc; border: 2px solid #cfcfcf; border-bottom: 0; border-radius: 5px 5px 0 0; margin-bottom: -2px; height: 63px; }
.close { margin-left: auto; height: 51px; display: block; }
.sidebody { flex: 1; min-height: 0; display: flex; }
.thumbs { flex: 1; overflow: hidden; padding: 20px 0 0 2px; background: linear-gradient(#f7f7f7, #d8d8d8); }
.thumbs li { height: 338px; display: flex; flex-direction: column; align-items: center; font: 700 20px/28px "Open Sans", sans-serif; color: #666; gap: 10px; }
.thumbs button { width: 186px; height: 242px; flex: none; background: #fff; border: 2px solid #a0a5ae; box-shadow: 0 4px 14px rgba(0,0,0,.15); }
.thumbs svg { width: 186px; height: 242px; margin: -2px; font-family: "Liberation Serif", serif; font-weight: 400; }
.thumbs svg text { fill: #444; }
.thumbs svg .strong { font-weight: 800; fill: #000; }
.thumbs .current { color: #4f6fa8; }
.thumbs .current button { box-shadow: 0 0 0 1px #fff, 0 0 0 2px #5579b5, 0 0 0 3px #fff, 0 0 0 4px #5579b5; }
.ss { font-family: "Open Sans", sans-serif; }
.sans { font-family: "Liberation Sans", sans-serif; }
.vscroll { width: 30px; flex: none; background: #fafafa; border-left: 2px solid #e6e6e6; }
.vscroll i { display: block; width: 16px; border-radius: 8px; background: #c2c2c2; margin: 0 auto; }
.vscroll.side { padding-top: 6px; }
.vscroll.side i { height: 156px; }
.vscroll.doc { padding-top: 682px; }
.vscroll.doc i { height: 407px; }
.strip { height: 29px; flex: none; background: #fafafa; border-top: 2px solid #e2e2e2; }

.docarea { flex: 1; min-width: 0; display: flex; flex-direction: column; background: #f4f4f4; }
.ruler { height: 32px; flex: none; display: flex; background: #fff; border-bottom: 2px solid #dcdcdc; margin-bottom: 12px; }
.tabstop { width: 32px; padding: 3px 0 0 8px; }
.hatch { background: #e8e8e8; display: flex; align-items: center; justify-content: center; }
.hatch i, .edge i { display: block; width: 15px; height: 20px; background: radial-gradient(circle, #888 1px, transparent 2px) 0 0 / 4px 5px; }
.h1 { width: 40px; padding-right: 1px; border-left: 8px solid #dedede; }
.blank { width: 14px; background: linear-gradient(#bbb, #bbb) 10px 12px / 2px 18px no-repeat; }
.h2 { width: 28px; }
.stub { width: 13px; background: linear-gradient(#bbb, #bbb) 2px 22px / 2px 8px no-repeat; }
.scale { flex: 1; display: grid; grid-template-columns: repeat(52, 1fr); }
.scale span {
  text-align: center; font: 18px/22px "Open Sans", sans-serif; color: #777;
  background-image: linear-gradient(#bbb, #bbb), linear-gradient(#bbb, #bbb), linear-gradient(#bbb, #bbb), linear-gradient(#bbb, #bbb);
  background-size: 2px 18px, 2px 8px, 2px 8px, 2px 8px;
  background-position: left bottom, 26% bottom, 51% bottom, 76% bottom;
  background-repeat: no-repeat; min-width: 0;
}
.scale .g { background-color: #dedede; }
.scale .edge { background: linear-gradient(#bbb, #bbb) left bottom / 2px 18px no-repeat, linear-gradient(90deg, #fff 9px, #e8e8e8 9px 37px, #dedede 37px); padding: 5px 0 0 16px; }
.tail { width: 23px; background: linear-gradient(#bbb, #bbb) left bottom / 2px 18px no-repeat, linear-gradient(90deg, #dedede 9px, #ccc 9px 11px, #fff 11px); }
.docrow { flex: 1; min-height: 0; display: flex; }
.page { flex: 1; overflow: hidden; background: #fff; padding-left: 60px; font: 22px/30px "Liberation Serif", serif; color: #000; }
.page svg { font-family: "Liberation Serif", serif; }
.q, .opt { font: 22px/30px "Open Sans", sans-serif; color: #494c4e; }
.q { margin-top: -5px; }
.lead { margin-top: 35px; padding-left: 2px; font-size: 20px; }
.figure { margin-top: 18px; }
.fig { margin-top: 18px; }
.refer { margin-top: 22px; }
.opt { margin-top: 31px; }
.answers { padding-left: 44px; margin-top: 15px; display: flex; flex-direction: column; gap: 30px; }
.q5 { margin-top: 19px; }
.which { margin-top: 37px; }
.opt.tight { margin-top: -1px; }

/* status bar */
.status { height: 47px; flex: none; display: flex; align-items: center; border-top: 2px solid #a2a2a2; background: linear-gradient(#e4e4e4, #d8d8d8); font-size: 24px; color: #505050; padding-left: 48px; }
.proof { margin: 0 44px 0 37px; }
.views { margin-left: auto; display: flex; align-self: stretch; }
.views button { width: 72px; display: flex; align-items: center; justify-content: center; }
.views .on { background: #a8a8a8; }
.zoombtn { margin: 0 0 0 14px; }
.zoom { appearance: none; width: 196px; height: 24px; margin: 0 0 0 16px; background: radial-gradient(circle at 98px 12px, #e4e4e4 3px, transparent 4px), linear-gradient(#9d9d9d, #9d9d9d) center / 100% 8px no-repeat; border-radius: 4px; }
.zoom::-webkit-slider-thumb { appearance: none; width: 22px; height: 22px; border-radius: 50%; background: #fff; box-shadow: 0 1px 3px rgba(0,0,0,.5); }
.zoom + .zoombtn { margin-left: 16px; }
.pct { width: 131px; padding-left: 35px; }

.preview { position: absolute; right: 24px; bottom: 114px; width: 304px; height: 196px; background: #fff; border: 8px solid #000; border-radius: 8px; box-shadow: 0 6px 60px rgba(0,0,0,.3); }
.preview svg { width: 286px; height: 178px; margin: 1px; font-family: "Liberation Serif", serif; }
```
